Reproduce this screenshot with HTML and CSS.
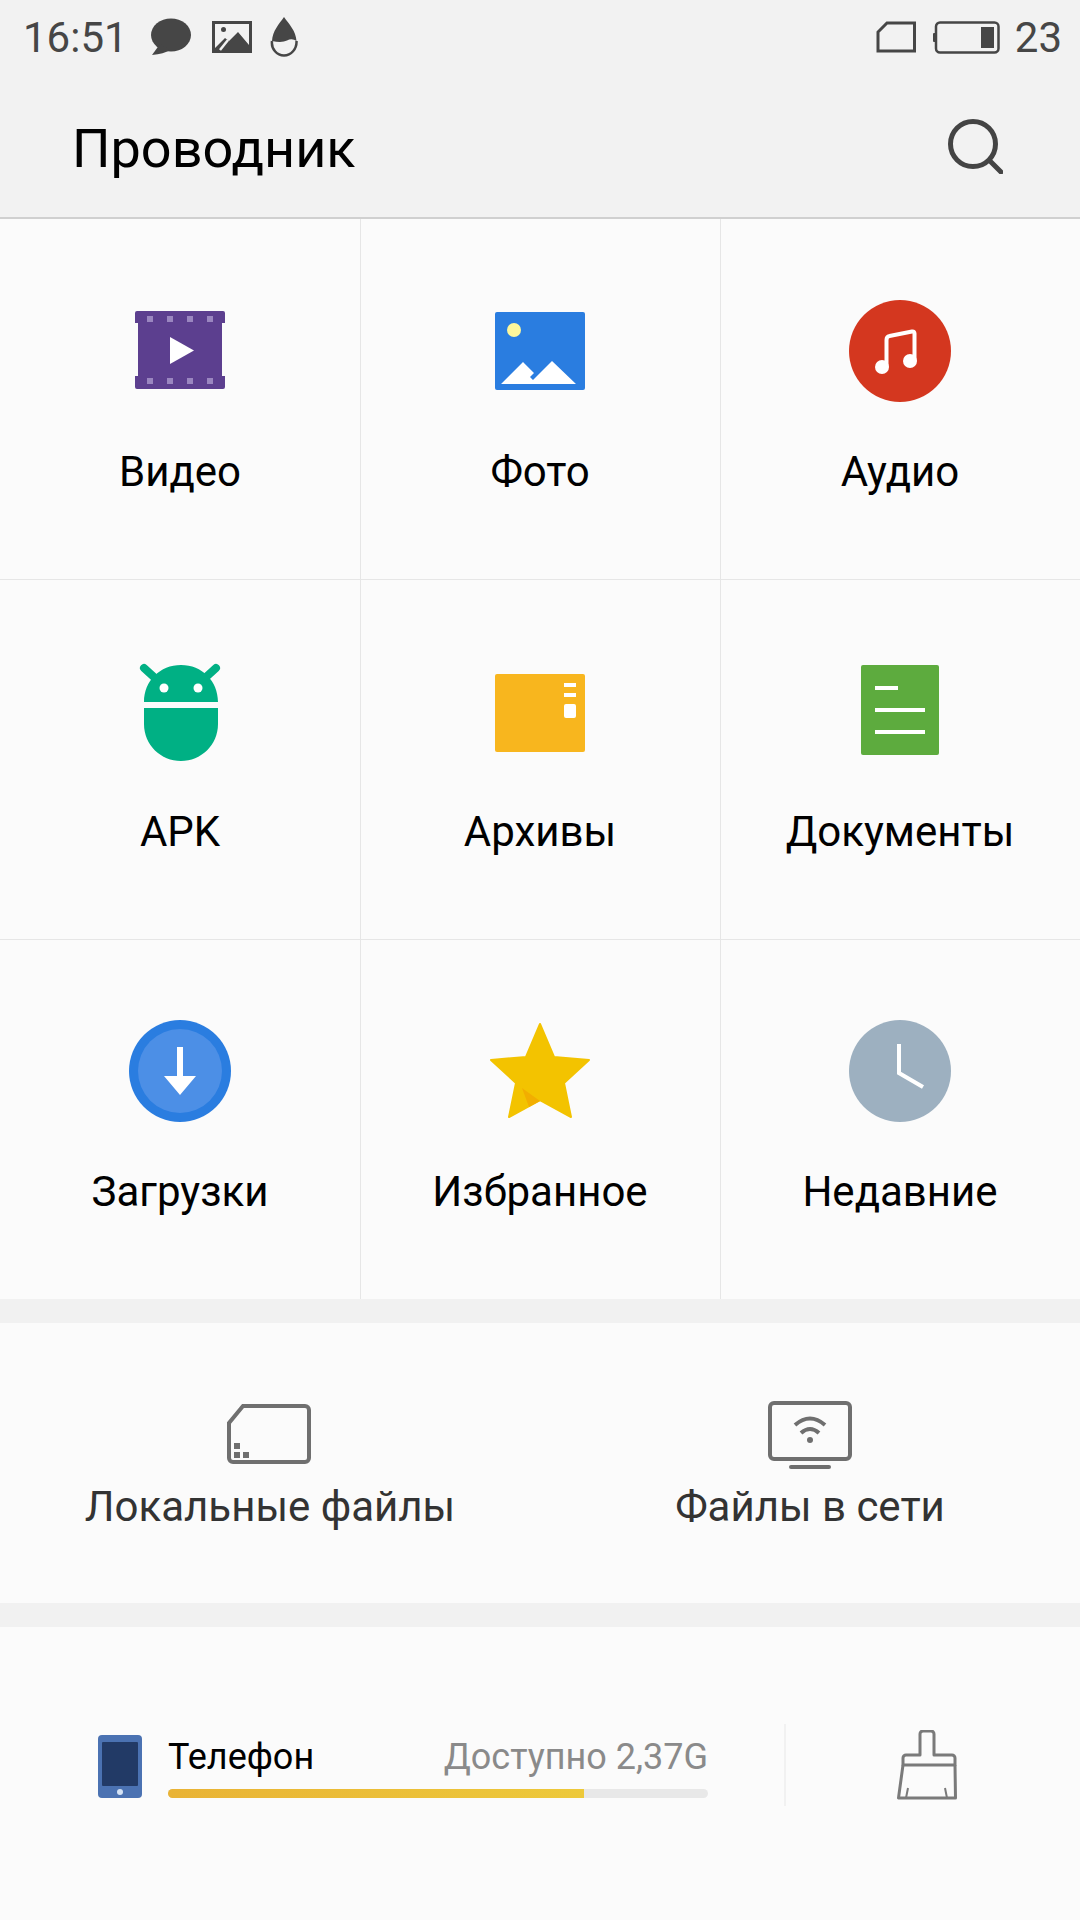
FILE: index.html
```html
<!DOCTYPE html>
<html>
<head>
  <meta charset="utf-8" />
  <title>Проводник</title>
  <link rel="stylesheet" href="styles.css">
</head>
<body>
  <div id="header">
    <div id="status">
      <span class="clock">16:51</span>
      <svg class="st-chat" width="42" height="38" viewBox="0 0 42 38"><ellipse cx="21" cy="17" rx="20" ry="16.500"/><path d="M10 26 L2 37 Q14 36 20 32Z"/></svg>
      <svg class="st-pic" width="40" height="32" viewBox="0 0 40 32"><rect width="40" height="32"/><path fill="#f2f2f2" d="M3 3H37V24L26 11L17 20L13 17L3 27Z"/><path d="M16 19L8 29" stroke="#f2f2f2" stroke-width="2.500"/><circle cx="11.500" cy="8.500" r="2.500"/></svg>
      <svg class="st-drop" width="28" height="40" viewBox="0 0 28 40"><path d="M14 0C19 7 26 14 26.500 24Q22 21 17 23.500T2 24C2.500 14 9 7 14 0Z"/><path d="M2 24C1 32 7 38.500 14 38.500S27 32 26.500 24" fill="none" stroke="#464646" stroke-width="2.500"/></svg>
      <span class="spacer"></span>
      <svg class="st-sd" width="40" height="32" viewBox="0 0 40 32"><path d="M11 2H38.500V30H2V11Z" fill="none" stroke="#464646" stroke-width="3"/></svg>
      <svg class="st-batt" width="67" height="33" viewBox="0 0 67 33"><rect x="3" y="1.500" width="62.500" height="30" rx="4" fill="none" stroke="#464646" stroke-width="2.500"/><rect x="0" y="12" width="3" height="9" rx="1"/><rect x="48" y="6" width="13" height="21"/></svg>
      <span class="batt-num">23</span>
    </div>
    <div id="toolbar">
      <h1>Проводник</h1>
      <svg class="search" width="55" height="55" viewBox="0 0 55 55" fill="none" stroke="#444" stroke-width="5" stroke-linecap="round"><circle cx="25" cy="25" r="22.500"/><path d="M42 42L53 53"/></svg>
    </div>
  </div>

  <div id="categories">
    <div class="cell">
      <svg class="cell-icon" viewBox="0 0 120 120">
        <path fill="#5c3f8f" d="M17 20H103a2 2 0 0 1 2 2V32H102V85H105V96a2 2 0 0 1-2 2H17a2 2 0 0 1-2-2V85H18V32H15V22a2 2 0 0 1 2-2Z"/>
        <g fill="#9a86c0"><rect x="27" y="25" width="6" height="6"/><rect x="47" y="25" width="6" height="6"/><rect x="67" y="25" width="6" height="6"/><rect x="87" y="25" width="6" height="6"/><rect x="27" y="87" width="6" height="6"/><rect x="47" y="87" width="6" height="6"/><rect x="67" y="87" width="6" height="6"/><rect x="87" y="87" width="6" height="6"/></g>
        <path fill="#fff" d="M50 46L74 59.500L50 73Z"/>
      </svg>
      <span class="label">Видео</span>
    </div>
    <div class="cell">
      <svg class="cell-icon" viewBox="0 0 120 120">
        <rect x="15" y="21" width="90" height="78" rx="2" fill="#2a7de0"/>
        <circle cx="34" cy="39" r="7" fill="#fdf79b"/>
        <path fill="#fff" d="M21 93L43 71L54 82L50 86L53 89L72 70L96 93Z"/>
      </svg>
      <span class="label">Фото</span>
    </div>
    <div class="cell">
      <svg class="cell-icon" viewBox="0 0 120 120">
        <circle cx="60" cy="60" r="51" fill="#d4371f"/>
        <circle cx="42" cy="76" r="7" fill="#fff"/><circle cx="70" cy="70" r="7" fill="#fff"/>
        <path d="M46.500 76V49q0-3.500 3-4L72 40.500q2.500-.5 2.500 2V70" fill="none" stroke="#fff" stroke-width="4"/>
      </svg>
      <span class="label">Аудио</span>
    </div>
    <div class="cell">
      <svg class="cell-icon" viewBox="0 0 120 120">
        <path d="M24 17L35 27M96 17L85 27" stroke="#00b084" stroke-width="8" stroke-linecap="round"/>
        <path fill="#00b084" d="M24 51C24 30 40 14 61 14S98 30 98 51ZM24 57H98V73C98 94 81 110 61 110S24 94 24 73Z"/>
        <circle cx="44" cy="37" r="4.500" fill="#fff"/><circle cx="78" cy="37" r="4.500" fill="#fff"/>
      </svg>
      <span class="label">APK</span>
    </div>
    <div class="cell">
      <svg class="cell-icon" viewBox="0 0 120 120">
        <rect x="15" y="23" width="90" height="78" rx="2" fill="#f8b61e"/>
        <g fill="#fff"><rect x="84" y="32" width="12" height="4"/><rect x="84" y="42" width="12" height="4"/><rect x="84" y="53" width="12" height="14" rx="2"/></g>
      </svg>
      <span class="label">Архивы</span>
    </div>
    <div class="cell">
      <svg class="cell-icon" viewBox="0 0 120 120">
        <rect x="21" y="14" width="78" height="90" rx="2" fill="#5dab3e"/>
        <g fill="#fff"><rect x="35" y="35" width="23" height="4"/><rect x="35" y="57" width="50" height="4"/><rect x="35" y="79" width="50" height="4"/></g>
      </svg>
      <span class="label">Документы</span>
    </div>
    <div class="cell">
      <svg class="cell-icon" viewBox="0 0 120 120">
        <circle cx="60" cy="60" r="51" fill="#2a7de0"/><circle cx="60" cy="60" r="42" fill="#4c8fe6"/>
        <path fill="#fff" d="M57 36H63V65H76L60 84L44 65H57Z"/>
      </svg>
      <span class="label">Загрузки</span>
    </div>
    <div class="cell">
      <svg class="cell-icon" viewBox="0 0 120 120">
        <path fill="#f3c300" stroke="#f3c300" stroke-width="2" stroke-linejoin="round" d="M60 13L74 46L109 49L84 72L91 106L60 89L29 106L36 72L11 49L46 46Z"/>
        <path fill="#f2ae00" d="M42 77L60 90L49 96Z"/>
      </svg>
      <span class="label">Избранное</span>
    </div>
    <div class="cell">
      <svg class="cell-icon" viewBox="0 0 120 120">
        <circle cx="60" cy="60" r="51" fill="#9db0c0"/>
        <path d="M59 33V62L83 76" fill="none" stroke="#fff" stroke-width="4"/>
      </svg>
      <span class="label">Недавние</span>
    </div>
  </div>

  <div id="places">
    <div class="place">
      <svg class="place-sd" width="84" height="60" viewBox="0 0 84 60" fill="none">
        <path d="M16 2H78a4 4 0 0 1 4 4V54a4 4 0 0 1-4 4H6a4 4 0 0 1-4-4V19Z" stroke="#6f6f6f" stroke-width="4"/>
        <g fill="#6f6f6f"><rect x="7" y="39" width="6" height="6"/><rect x="7" y="48" width="6" height="6"/><rect x="16" y="48" width="6" height="6"/></g>
      </svg>
      <span class="place-label">Локальные файлы</span>
    </div>
    <div class="place">
      <svg width="84" height="68" viewBox="0 0 84 68" fill="none" stroke="#6f6f6f">
        <rect x="2" y="2" width="80" height="56" rx="4" stroke-width="4"/>
        <path d="M27 24Q42 11 57 24M33 32Q42 24 51 32" stroke-width="4"/>
        <circle cx="42" cy="39" r="3" fill="#6f6f6f" stroke="none"/>
        <rect x="21" y="64" width="42" height="4" rx="2" fill="#6f6f6f" stroke="none"/>
      </svg>
      <span class="place-label">Файлы в сети</span>
    </div>
  </div>

  <div id="storage">
    <svg class="phone" width="44" height="63" viewBox="0 0 44 63">
      <rect width="44" height="63" rx="4" fill="#4b72b2"/>
      <rect x="4" y="7" width="36" height="44" rx="1" fill="#223a66"/>
      <circle cx="22" cy="57" r="3" fill="#d5e3f5"/>
    </svg>
    <div class="volume">
      <div class="volume-text">
        <span class="volume-name">Телефон</span>
        <span class="volume-free">Доступно 2,37G</span>
      </div>
      <div class="bar"><div class="bar-fill" style="width: 77%"></div></div>
    </div>
    <div class="clean">
      <svg width="60" height="70" viewBox="0 0 60 70" fill="none" stroke="#7a7a7a" stroke-width="3" stroke-linejoin="round">
        <path d="M23 25V4a3 3 0 0 1 3-3H34a3 3 0 0 1 3 3V25H55a3 3 0 0 1 3 3V35H6V28a3 3 0 0 1 3-3Z"/>
        <path d="M6 35L1.500 68H58.500L58 35"/>
        <path d="M9 68L11 58M50 68L48 58" stroke-width="2"/>
      </svg>
    </div>
  </div>
</body>
</html>
```

FILE: styles.css
```css
* {
  box-sizing: border-box;
}
body {
  margin: 0;
  width: 1080px;
  height: 1920px;
  overflow: hidden;
  background: #fbfbfb;
  font-family: Roboto, sans-serif;
  color: #000;
}
#header {
  height: 219px;
  background: #f2f2f2;
  border-bottom: 2px solid #d0d0d0;
}
#status {
  display: flex;
  align-items: center;
  height: 72px;
  padding: 2px 18px 0 23px;
  color: #464646;
  fill: #464646;
}
.clock {
  font-size: 42px;
  width: 127px;
}
.st-pic {
  margin-left: 20px;
}
.st-drop {
  margin-left: 18px;
}
.spacer {
  flex: 1;
}
.st-batt {
  margin-left: 17px;
}
.batt-num {
  margin-left: 15px;
  font-size: 42px;
}
#toolbar {
  display: flex;
  align-items: center;
  justify-content: space-between;
  height: 145px;
  padding: 0 77px 0 72px;
}
#toolbar h1 {
  margin: 8px 0 0;
  font-size: 54px;
  font-weight: 400;
}
.search {
  margin-top: 4px;
}
#categories {
  display: grid;
  grid-template-columns: repeat(3, 360px);
  grid-auto-rows: 360px;
  border-bottom: 24px solid #f1f1f1;
  height: 1104px;
}
.cell {
  display: flex;
  flex-direction: column;
  align-items: center;
  padding-top: 72px;
  box-shadow: inset 1px 1px 0 #e6e6e6;
}
.cell:nth-child(1) {
  box-shadow: none;
}
.cell:nth-child(2), .cell:nth-child(3) {
  box-shadow: inset 1px 0 0 #e6e6e6;
}
.cell:nth-child(4), .cell:nth-child(7) {
  box-shadow: inset 0 1px 0 #e6e6e6;
}
.cell-icon {
  width: 120px;
  height: 120px;
  display: block;
}
.label {
  margin-top: 37px;
  font-size: 42px;
  line-height: 48px;
}
#places {
  display: flex;
  height: 304px;
  border-bottom: 24px solid #f1f1f1;
}
.place {
  width: 540px;
  height: 280px;
  display: flex;
  flex-direction: column;
  align-items: center;
  justify-content: flex-end;
  padding-bottom: 72px;
}
.place-sd {
  margin: 0 0 5px -2px;
}
.place-label {
  margin-top: 14px;
  font-size: 42px;
  line-height: 48px;
  color: #333;
}
#storage {
  display: flex;
  align-items: center;
  height: 294px;
  padding: 0 0 18px 98px;
}
.phone {
  flex: none;
  margin-top: 2px;
}
.volume {
  width: 540px;
  margin-left: 26px;
}
.volume-text {
  display: flex;
  justify-content: space-between;
  align-items: baseline;
  line-height: 48px;
}
.volume-name {
  font-size: 36px;
}
.volume-free {
  font-size: 36px;
  color: #8a8a8a;
}
.bar {
  height: 9px;
  margin-top: 8px;
  border-radius: 5px;
  background: #e8e8e8;
  overflow: hidden;
}
.bar-fill {
  height: 100%;
  background: linear-gradient(90deg, #e9b335, #edc93a);
}
.clean {
  display: flex;
  justify-content: center;
  align-items: center;
  width: 222px;
  height: 82px;
  margin-left: 76px;
  border-left: 2px solid #f1f1f1;
  padding-left: 62px;
}
```
